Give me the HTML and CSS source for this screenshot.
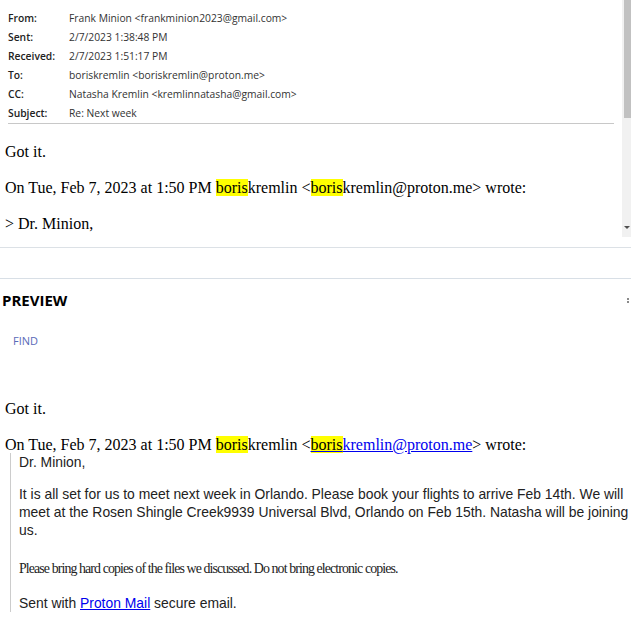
FILE: index.html
```html
<!DOCTYPE html>
<html>
<head>
<meta charset="utf-8">
<link rel="stylesheet" href="styles.css">
</head>
<body>
<div class="reader">
  <div class="pane">
    <div class="pane-content">
      <div class="headers">
        <div class="hrow"><span class="hlabel">From:</span><span class="hval">Frank Minion &lt;frankminion2023@gmail.com&gt;</span></div>
        <div class="hrow"><span class="hlabel">Sent:</span><span class="hval">2/7/2023 1:38:48 PM</span></div>
        <div class="hrow"><span class="hlabel">Received:</span><span class="hval">2/7/2023 1:51:17 PM</span></div>
        <div class="hrow"><span class="hlabel">To:</span><span class="hval">boriskremlin &lt;boriskremlin@proton.me&gt;</span></div>
        <div class="hrow"><span class="hlabel">CC:</span><span class="hval">Natasha Kremlin &lt;kremlinnatasha@gmail.com&gt;</span></div>
        <div class="hrow"><span class="hlabel">Subject:</span><span class="hval">Re: Next week</span></div>
      </div>
      <div class="plain">
        <p>Got it.</p>
        <p>On Tue, Feb 7, 2023 at 1:50 PM <mark>boris</mark>kremlin &lt;<mark>boris</mark>kremlin@proton.me&gt; wrote:</p>
        <p>&gt; Dr. Minion,</p>
      </div>
    </div>
    <div class="scrollbar">
      <div class="thumb"></div>
      <div class="arrow"></div>
    </div>
  </div>
  <div class="spacer"></div>
  <div class="preview-head">
    <h2>PREVIEW</h2>
    <span class="dots"><i></i><i></i></span>
  </div>
  <div class="find">FIND</div>
  <div class="html-body">
    <p class="first">Got it.</p>
    <p class="attrib">On Tue, Feb 7, 2023 at 1:50 PM <mark>boris</mark>kremlin &lt;<a href="#"><mark>boris</mark>kremlin@proton.me</a>&gt; wrote:</p>
    <blockquote>
      <p>Dr. Minion,</p>
      <p>It is all set for us to meet next week in Orlando. Please book your flights to arrive Feb 14th. We will meet at the Rosen Shingle Creek9939 Universal Blvd, Orlando on Feb 15th. Natasha will be joining us.</p>
      <p class="serif">Please bring hard copies of the files we discussed. Do not bring electronic copies.</p>
      <p>Sent with <a href="#">Proton Mail</a> secure email.</p>
    </blockquote>
  </div>
</div>
</body>
</html>
```

FILE: styles.css
```css
html, body {
  margin: 0;
  padding: 0;
  background: #ffffff;
  overflow: hidden;
}

.reader {
  width: 631px;
  height: 623px;
  overflow: hidden;
}

.pane {
  position: relative;
  height: 237px;
  overflow: hidden;
}

.pane-content {
  padding-right: 9px;
}

.headers {
  margin: 0 8px 0 8px;
  padding-top: 8px;
  padding-bottom: 1px;
  border-bottom: 1px solid #c8c8c8;
  font-family: "Open Sans", "Noto Sans", sans-serif;
  font-size: 10.3px;
}

.hrow {
  display: flex;
  height: 19px;
  align-items: center;
}

.hlabel {
  width: 61px;
  flex: none;
  font-weight: 600;
  color: #222;
}

.hval {
  color: #333;
}

.plain {
  font-family: "Liberation Serif", "Times New Roman", serif;
  font-size: 16px;
  color: #000;
  padding: 18px 5px 0;
}

.plain p {
  margin: 0 0 16px;
  line-height: 20px;
  white-space: nowrap;
}

mark {
  background: #ffff00;
  color: #000;
}

.scrollbar {
  position: absolute;
  top: 0;
  right: 0;
  width: 9px;
  height: 237px;
  background: #f1f1f1;
}

.thumb {
  position: absolute;
  top: 0;
  right: 0;
  width: 7px;
  height: 118px;
  background: #c1c1c1;
}

.arrow {
  position: absolute;
  right: 1px;
  top: 226px;
  width: 0;
  height: 0;
  border-left: 3px solid transparent;
  border-right: 3px solid transparent;
  border-top: 3px solid #505050;
}

.spacer {
  height: 30px;
  border-top: 1px solid #dce1e6;
  margin-top: 10px;
  border-bottom: 1px solid #d8dfe6;
}

.preview-head {
  display: flex;
  justify-content: space-between;
  align-items: center;
  padding: 12px 2px 0 2px;
}

.preview-head h2 {
  margin: 0;
  font-family: "Open Sans", "Noto Sans", sans-serif;
  font-weight: 700;
  font-size: 15px;
  color: #000;
  line-height: 18px;
}

.dots {
  display: flex;
  flex-direction: column;
  gap: 1px;
}

.dots i {
  display: block;
  width: 2px;
  height: 2px;
  background: #8a8a8a;
}

.find {
  margin: 24px 0 0 13px;
  font-family: "Open Sans", "Noto Sans", sans-serif;
  font-size: 11px;
  color: #5a6ab8;
  line-height: 16px;
}

.html-body {
  margin-top: 50px;
  padding: 0 0 0 5px;
  font-family: "Liberation Serif", "Times New Roman", serif;
  font-size: 16px;
  color: #000;
}

.html-body > p {
  margin: 0 0 16px;
  line-height: 20px;
  white-space: nowrap;
}

.html-body > p.first {
  margin-bottom: 18px;
}

.html-body > p.attrib {
  margin-bottom: 0;
  line-height: 16px;
}

a {
  color: #0000ee;
  text-decoration: underline;
}

blockquote {
  margin: 0 0 0 5px;
  padding-left: 8px;
  border-left: 1px solid #cccccc;
  font-family: "Liberation Sans", Arial, sans-serif;
  font-size: 13.9px;
  color: #222;
}

blockquote p {
  margin: 0 0 14px;
  line-height: 18px;
}

blockquote p.serif {
  font-family: "Liberation Serif", "Times New Roman", serif;
  letter-spacing: -0.9px;
  margin-top: 21px;
  margin-bottom: 16px;
}
```
